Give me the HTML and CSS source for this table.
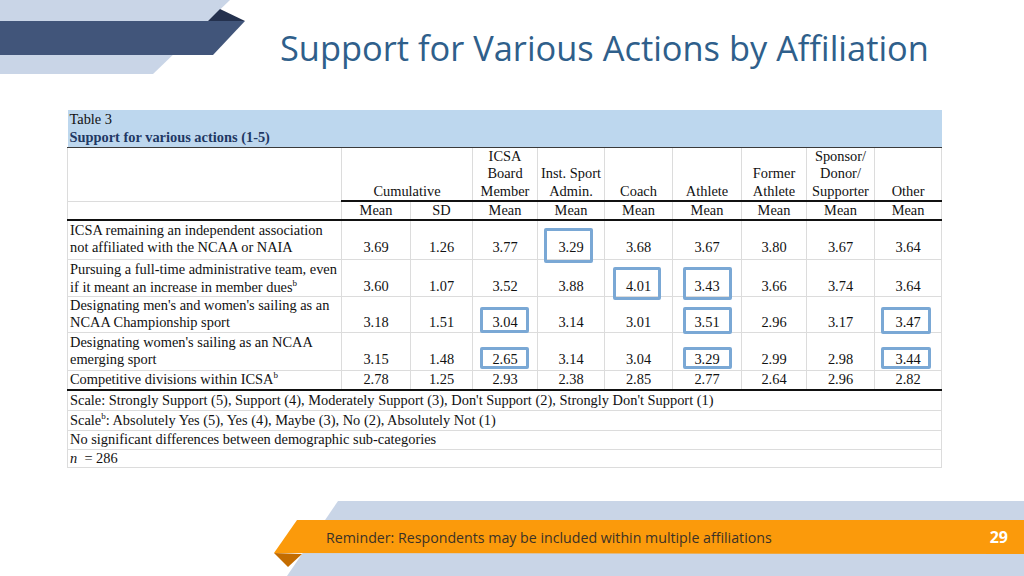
FILE: index.html
```html
<!DOCTYPE html>
<html>
<head>
<meta charset="utf-8">
<link rel="stylesheet" href="styles.css">
</head>
<body>
<div class="slide">
  <header class="top">
    <svg class="top-deco" width="250" height="75" viewBox="0 0 250 75">
      <polygon points="0,0 230,0 153,74 0,74" fill="#c9d5e7"/>
      <polygon points="208,21 220,9 245,21" fill="#24314e"/>
      <polygon points="0,21 245,21 213,55 0,55" fill="#41557a"/>
    </svg>
    <h1 class="title">Support for Various Actions by Affiliation</h1>
  </header>

  <main class="content">
    <div class="table-wrap">
      <table class="data">
        <colgroup>
          <col class="c-label"><col class="c-a"><col class="c-b"><col class="c-c"><col class="c-d"><col class="c-e"><col class="c-f"><col class="c-g"><col class="c-h"><col class="c-i">
        </colgroup>
        <tr class="r-title">
          <td colspan="10" class="title-cell"><div>Table 3</div><div class="bold">Support for various actions (1-5)</div></td>
        </tr>
        <tr class="r-head">
          <td class="label"></td>
          <td colspan="2" class="hc">Cumulative</td>
          <td class="hc">ICSA<br>Board<br>Member</td>
          <td class="hc">Inst. Sport<br>Admin.</td>
          <td class="hc">Coach</td>
          <td class="hc">Athlete</td>
          <td class="hc">Former<br>Athlete</td>
          <td class="hc">Sponsor/<br>Donor/<br>Supporter</td>
          <td class="hc">Other</td>
        </tr>
        <tr class="r-mean">
          <td class="label"></td>
          <td>Mean</td><td>SD</td><td>Mean</td><td>Mean</td><td>Mean</td><td>Mean</td><td>Mean</td><td>Mean</td><td>Mean</td>
        </tr>
        <tr class="r1">
          <td class="label">ICSA remaining an independent association<br>not affiliated with the NCAA or NAIA</td>
          <td>3.69</td><td>1.26</td><td>3.77</td><td>3.29</td><td>3.68</td><td>3.67</td><td>3.80</td><td>3.67</td><td>3.64</td>
        </tr>
        <tr class="r2">
          <td class="label">Pursuing a full-time administrative team, even<br>if it meant an increase in member dues<sup>b</sup></td>
          <td>3.60</td><td>1.07</td><td>3.52</td><td>3.88</td><td>4.01</td><td>3.43</td><td>3.66</td><td>3.74</td><td>3.64</td>
        </tr>
        <tr class="r3">
          <td class="label">Designating men's and women's sailing as an<br>NCAA Championship sport</td>
          <td>3.18</td><td>1.51</td><td>3.04</td><td>3.14</td><td>3.01</td><td>3.51</td><td>2.96</td><td>3.17</td><td>3.47</td>
        </tr>
        <tr class="r4">
          <td class="label">Designating women's sailing as an NCAA<br>emerging sport</td>
          <td>3.15</td><td>1.48</td><td>2.65</td><td>3.14</td><td>3.04</td><td>3.29</td><td>2.99</td><td>2.98</td><td>3.44</td>
        </tr>
        <tr class="r5">
          <td class="label">Competitive divisions within ICSA<sup>b</sup></td>
          <td>2.78</td><td>1.25</td><td>2.93</td><td>2.38</td><td>2.85</td><td>2.77</td><td>2.64</td><td>2.96</td><td>2.82</td>
        </tr>
        <tr class="r-note">
          <td colspan="10" class="note">Scale: Strongly Support (5), Support (4), Moderately Support (3), Don't Support (2), Strongly Don't Support (1)</td>
        </tr>
        <tr class="r-note">
          <td colspan="10" class="note">Scale<sup>b</sup>: Absolutely Yes (5), Yes (4), Maybe (3), No (2), Absolutely Not (1)</td>
        </tr>
        <tr class="r-note r-nosig">
          <td colspan="10" class="note">No significant differences between demographic sub-categories</td>
        </tr>
        <tr class="r-note r-n">
          <td colspan="10" class="note"><i>n</i> &nbsp;= 286</td>
        </tr>
      </table>
      <span class="hl" style="left:477px;top:118px;width:49px;height:35px"></span>
      <span class="hl" style="left:546px;top:157px;width:48px;height:33px"></span>
      <span class="hl" style="left:616px;top:157px;width:49px;height:33px"></span>
      <span class="hl" style="left:413px;top:197px;width:49px;height:26px"></span>
      <span class="hl" style="left:616px;top:197px;width:49px;height:27px"></span>
      <span class="hl" style="left:814px;top:197px;width:50px;height:27px"></span>
      <span class="hl" style="left:413px;top:237px;width:49px;height:22px"></span>
      <span class="hl" style="left:616px;top:237px;width:49px;height:22px"></span>
      <span class="hl" style="left:814px;top:237px;width:50px;height:22px"></span>
    </div>
  </main>

  <footer class="bottom">
    <svg class="bottom-deco" width="1024" height="75" viewBox="0 0 1024 75">
      <polygon points="338,0 1024,0 1024,75 287,75" fill="#c9d5e7"/>
      <polygon points="274,52 302,53 288,66" fill="#c46c00"/>
      <polygon points="297,19 1024,19 1024,53 274,52" fill="#fb9a0b"/>
    </svg>
    <div class="bar">
      <span class="reminder">Reminder: Respondents may be included within multiple affiliations</span>
      <span class="page">29</span>
    </div>
  </footer>
</div>
</body>
</html>
```

FILE: styles.css
```css
html, body {
  margin: 0;
  padding: 0;
  background: #ffffff;
}

.slide {
  width: 1024px;
  height: 576px;
  display: flex;
  flex-direction: column;
  overflow: hidden;
  background: #ffffff;
}

.top {
  display: flex;
  align-items: flex-start;
  height: 75px;
  flex: none;
}

.top-deco {
  display: block;
  flex: none;
}

.title {
  margin: 25px 0 0 30px;
  font-family: "Open Sans", "Noto Sans", sans-serif;
  font-weight: 400;
  font-size: 34.4px;
  line-height: 46px;
  color: #2f5f8b;
  white-space: nowrap;
}

.content {
  flex: 1;
  padding: 35px 0 0 67px;
}

.table-wrap {
  position: relative;
  width: 874px;
}

.data {
  border-collapse: collapse;
  table-layout: fixed;
  width: 874px;
  font-family: "Liberation Serif", "Times New Roman", serif;
  font-size: 14.4px;
  color: #111111;
}

.c-label { width: 274px; }
.c-a { width: 69px; }
.c-b { width: 62px; }
.c-c { width: 65px; }
.c-d { width: 67px; }
.c-e { width: 68px; }
.c-f { width: 69px; }
.c-g { width: 65px; }
.c-h { width: 68px; }
.c-i { width: 67px; }

.data td {
  padding: 0;
  text-align: center;
  vertical-align: bottom;
  line-height: 17px;
  border-left: 1px solid #dcdcdc;
  border-right: 1px solid #dcdcdc;
  border-bottom: 1px solid #dcdcdc;
  white-space: nowrap;
}

.data td.label,
.data td.note {
  text-align: left;
  padding-left: 2px;
}

.data sup {
  font-size: 9px;
  line-height: 0;
  vertical-align: 6px;
}

.title-cell {
  background: #bdd7ee;
  text-align: left !important;
  padding-left: 2px !important;
  vertical-align: middle !important;
  line-height: 18px !important;
  border: none !important;
  border-bottom: 1px solid #3a3a3a !important;
}

.title-cell .bold {
  font-weight: 700;
  color: #1f3864;
}

.r-title { height: 37px; }

.r-head { height: 53px; }
.r-head .hc {
  line-height: 17.5px;
  border-bottom: 2px solid #111111;
}
.r-head td.label {
  border-bottom: 1px solid #dcdcdc;
}

.r-mean { height: 19px; }
.r-mean td {
  vertical-align: middle;
  border-bottom: 2px solid #111111;
}

.r1 { height: 39px; }
.r1 td { padding-bottom: 3px; }
.r2 { height: 37px; }
.r2 td { padding-bottom: 1px; }
.r2 td.label { line-height: 18px; padding-bottom: 0; }
.r3 { height: 36px; }
.r3 td { padding-bottom: 1px; }
.r4 { height: 38px; }
.r4 td { padding-bottom: 2px; }
.r5 { height: 20px; }
.r5 td {
  vertical-align: middle;
  border-bottom: 2px solid #111111;
}

.r-note { height: 20px; }
.r-note td { vertical-align: middle; }
.r-nosig { height: 19px; }
.r-n { height: 18px; }

.hl {
  position: absolute;
  box-sizing: border-box;
  border: 3px solid #7aa8d5;
  border-radius: 2px;
}

.bottom {
  position: relative;
  flex: none;
  height: 75px;
}

.bottom-deco {
  position: absolute;
  left: 0;
  top: 0;
  display: block;
}

.bar {
  position: relative;
  display: flex;
  align-items: center;
  justify-content: space-between;
  margin-top: 19px;
  height: 34px;
  padding: 0 16px 0 326px;
  font-family: "Open Sans", "Noto Sans", sans-serif;
}

.reminder {
  font-size: 14.2px;
  color: #3b3226;
}

.page {
  font-size: 16px;
  font-weight: 700;
  color: #ffffff;
}
```
